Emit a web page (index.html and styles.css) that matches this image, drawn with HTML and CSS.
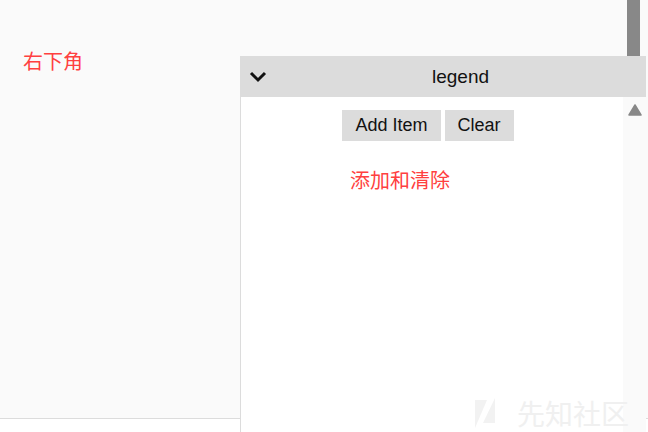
FILE: index.html
```html
<!DOCTYPE html>
<html lang="zh">
<head>
<meta charset="utf-8">
<link rel="stylesheet" href="styles.css">
</head>
<body>
<main class="main">
  <p class="note">右下角</p>
</main>
<div class="page-thumb"></div>
<section class="panel">
  <header class="panel-head">
    <svg class="chevron" width="18" height="12" viewBox="0 0 18 12"><polyline points="2,2 9,9 16,2" fill="none" stroke="#111" stroke-width="3"/></svg>
    <span class="panel-title">legend</span>
  </header>
  <div class="panel-body">
    <div class="panel-content">
      <div class="btns">
        <button class="btn">Add Item</button>
        <button class="btn">Clear</button>
      </div>
      <p class="note note-inner">添加和清除</p>
    </div>
    <div class="track">
      <svg width="14" height="12" viewBox="0 0 14 12"><polygon points="7,1 13,11 1,11" fill="#888" stroke="#888" stroke-width="1.5" stroke-linejoin="round"/></svg>
    </div>
  </div>
</section>
<div class="watermark">
  <svg width="26" height="34" viewBox="0 0 26 34"><polygon points="0,2 12,2 0,30" fill="#f2f2f2"/><polygon points="20,0 20,25 8,25" fill="#f2f2f2"/></svg>
  <span class="wm-text">先知社区</span>
</div>
</body>
</html>
```
FILE: styles.css
```css
html, body {
  margin: 0;
  padding: 0;
  background: #fff;
  height: 432px;
  overflow: hidden;
  font-family: "Liberation Sans", Arial, "Noto Sans CJK SC", sans-serif;
}
.main {
  height: 418px;
  background: #fafafa;
  border-bottom: 1px solid #dcdcdc;
  padding: 0 0 0 23px;
  box-sizing: content-box;
}
.note {
  margin: 0;
  padding-top: 47px;
  font-family: "Noto Sans CJK SC", sans-serif;
  font-size: 20px;
  line-height: 28px;
  color: #ff4040;
}
.page-thumb {
  position: absolute;
  top: 0;
  right: 8px;
  width: 13px;
  height: 56px;
  background: #888;
}
.panel {
  position: absolute;
  left: 240px;
  top: 56px;
  right: 2px;
  bottom: 0;
  border-left: 1px solid #dcdcdc;
  background: #fff;
  display: flex;
  flex-direction: column;
}
.panel-head {
  height: 41px;
  background: #dcdcdc;
  display: flex;
  align-items: center;
  padding-left: 8px;
}
.chevron {
  flex: none;
}
.panel-title {
  flex: 1;
  text-align: center;
  font-size: 19px;
  color: #111;
  padding-left: 8px;
}
.panel-body {
  flex: 1;
  display: flex;
}
.panel-content {
  flex: 1;
  padding-top: 13px;
}
.btns {
  display: flex;
  justify-content: center;
  gap: 4px;
  padding-right: 8px;
}
.btn {
  font-family: "Liberation Sans", Arial, sans-serif;
  font-size: 18px;
  line-height: 21px;
  padding: 5px 13px;
  border: none;
  background: #dcdcdc;
  color: #111;
}
.note-inner {
  padding-top: 25px;
  padding-left: 109px;
}
.track {
  width: 23px;
  background: #fafafa;
  display: flex;
  justify-content: center;
  padding-top: 7px;
}
.track svg {
  display: block;
}
.watermark {
  position: absolute;
  left: 475px;
  bottom: 0;
  display: flex;
  align-items: flex-start;
  gap: 16px;
  height: 34px;
  white-space: nowrap;
}
.wm-text {
  font-family: "Noto Sans CJK SC", sans-serif;
  font-size: 28px;
  line-height: 30px;
  color: #f0f0f0;
}
```
